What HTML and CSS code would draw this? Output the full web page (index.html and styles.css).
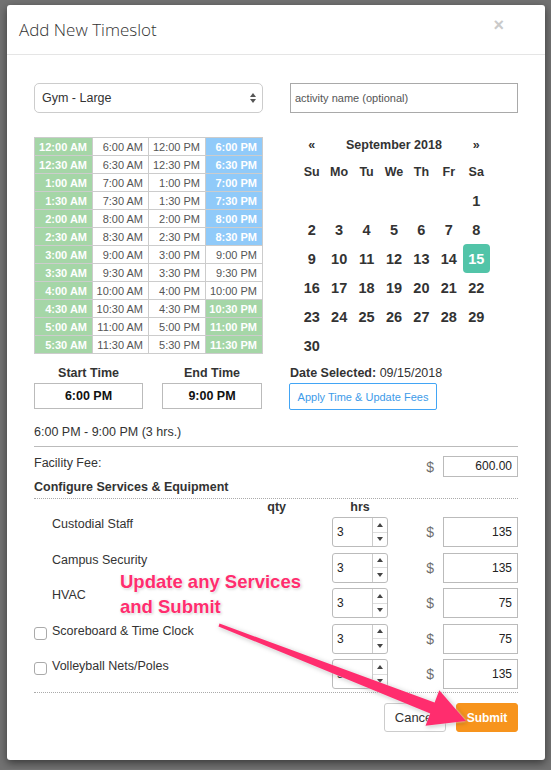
FILE: index.html
```html
<!DOCTYPE html>
<html lang="en">
<head>
    <meta charset="UTF-8">
    <meta name="viewport" content="width=device-width, initial-scale=1.0">
    <title>Add New Timeslot</title>
    <link rel="stylesheet" href="styles.css">
</head>
<body>
    <div class="backdrop">
        <div class="modal">
            <div class="modal-header">
                <h4>Add New Timeslot</h4>
                <span class="close">&times;</span>
            </div>

            <div class="modal-body">
                <div class="two-col">
                    <div class="fake-select">
                        <span>Gym - Large</span>
                        <svg width="6" height="12" viewBox="0 0 6 12">
                            <path d="M0 5 L3 1 L6 5 Z M0 7 L6 7 L3 11 Z" fill="#555"/>
                        </svg>
                    </div>
                    <input class="activity" type="text" placeholder="activity name (optional)">
                </div>

                <div class="two-col picker">
                    <table class="times">
                        <colgroup><col style="width:58px"><col style="width:56px"><col style="width:57px"><col style="width:57px"></colgroup>
                        <tr><td class="on">12:00 AM</td><td>6:00 AM</td><td>12:00 PM</td><td class="sel">6:00 PM</td></tr>
                        <tr><td class="on">12:30 AM</td><td>6:30 AM</td><td>12:30 PM</td><td class="sel">6:30 PM</td></tr>
                        <tr><td class="on">1:00 AM</td><td>7:00 AM</td><td>1:00 PM</td><td class="sel">7:00 PM</td></tr>
                        <tr><td class="on">1:30 AM</td><td>7:30 AM</td><td>1:30 PM</td><td class="sel">7:30 PM</td></tr>
                        <tr><td class="on">2:00 AM</td><td>8:00 AM</td><td>2:00 PM</td><td class="sel">8:00 PM</td></tr>
                        <tr><td class="on">2:30 AM</td><td>8:30 AM</td><td>2:30 PM</td><td class="sel">8:30 PM</td></tr>
                        <tr><td class="on">3:00 AM</td><td>9:00 AM</td><td>3:00 PM</td><td>9:00 PM</td></tr>
                        <tr><td class="on">3:30 AM</td><td>9:30 AM</td><td>3:30 PM</td><td>9:30 PM</td></tr>
                        <tr><td class="on">4:00 AM</td><td>10:00 AM</td><td>4:00 PM</td><td>10:00 PM</td></tr>
                        <tr><td class="on">4:30 AM</td><td>10:30 AM</td><td>4:30 PM</td><td class="on">10:30 PM</td></tr>
                        <tr><td class="on">5:00 AM</td><td>11:00 AM</td><td>5:00 PM</td><td class="on">11:00 PM</td></tr>
                        <tr><td class="on">5:30 AM</td><td>11:30 AM</td><td>5:30 PM</td><td class="on">11:30 PM</td></tr>
                    </table>

                    <table class="calendar">
                        <tr class="nav"><td>&laquo;</td><td colspan="5">September 2018</td><td>&raquo;</td></tr>
                        <tr class="dow"><td>Su</td><td>Mo</td><td>Tu</td><td>We</td><td>Th</td><td>Fr</td><td>Sa</td></tr>
                        <tr class="days"><td></td><td></td><td></td><td></td><td></td><td></td><td>1</td></tr>
                        <tr class="days"><td>2</td><td>3</td><td>4</td><td>5</td><td>6</td><td>7</td><td>8</td></tr>
                        <tr class="days"><td>9</td><td>10</td><td>11</td><td>12</td><td>13</td><td>14</td><td class="today">15</td></tr>
                        <tr class="days"><td>16</td><td>17</td><td>18</td><td>19</td><td>20</td><td>21</td><td>22</td></tr>
                        <tr class="days"><td>23</td><td>24</td><td>25</td><td>26</td><td>27</td><td>28</td><td>29</td></tr>
                        <tr class="days"><td>30</td><td></td><td></td><td></td><td></td><td></td><td></td></tr>
                    </table>
                </div>

                <div class="two-col">
                    <div class="time-boxes">
                        <div>
                            <div class="box-label">Start Time</div>
                            <div class="time-box">6:00 PM</div>
                        </div>
                        <div>
                            <div class="box-label">End Time</div>
                            <div class="time-box">9:00 PM</div>
                        </div>
                    </div>
                    <div>
                        <div class="box-label left"><b>Date Selected:</b> 09/15/2018</div>
                        <button class="apply">Apply Time &amp; Update Fees</button>
                    </div>
                </div>

                <p class="summary">6:00 PM - 9:00 PM (3 hrs.)</p>
                <div class="rule"></div>

                <div class="fee-row">
                    <span class="fee-label">Facility Fee:</span>
                    <span class="dollar">$</span>
                    <div class="price">600.00</div>
                </div>

                <div class="section-title">Configure Services &amp; Equipment</div>
                <div class="rule dotted"></div>

                <div class="svc-head">
                    <span class="check-slot"></span>
                    <span class="svc-name">qty</span>
                    <span class="spin-slot">hrs</span>
                </div>

                <div class="svc-row">
                    <span class="check-slot"></span>
                    <span class="svc-name">Custodial Staff</span>
                    <div class="spin"><span class="val">3</span><span class="arrows"><i class="up"></i><i class="down"></i></span></div>
                    <span class="dollar">$</span>
                    <div class="price">135</div>
                </div>
                <div class="svc-row">
                    <span class="check-slot"></span>
                    <span class="svc-name">Campus Security</span>
                    <div class="spin"><span class="val">3</span><span class="arrows"><i class="up"></i><i class="down"></i></span></div>
                    <span class="dollar">$</span>
                    <div class="price">135</div>
                </div>
                <div class="svc-row">
                    <span class="check-slot"></span>
                    <span class="svc-name">HVAC</span>
                    <div class="spin"><span class="val">3</span><span class="arrows"><i class="up"></i><i class="down"></i></span></div>
                    <span class="dollar">$</span>
                    <div class="price">75</div>
                </div>
                <div class="svc-row">
                    <span class="check-slot"><span class="checkbox"></span></span>
                    <span class="svc-name">Scoreboard &amp; Time Clock</span>
                    <div class="spin"><span class="val">3</span><span class="arrows"><i class="up"></i><i class="down"></i></span></div>
                    <span class="dollar">$</span>
                    <div class="price">75</div>
                </div>
                <div class="svc-row">
                    <span class="check-slot"><span class="checkbox"></span></span>
                    <span class="svc-name">Volleyball Nets/Poles</span>
                    <div class="spin"><span class="val">3</span><span class="arrows"><i class="up"></i><i class="down"></i></span></div>
                    <span class="dollar">$</span>
                    <div class="price">135</div>
                </div>

                <div class="rule dotted footer-rule"></div>
                <div class="footer">
                    <button class="btn-cancel">Cancel</button>
                    <button class="btn-submit">Submit</button>
                </div>
            </div>

            <!-- callout drawn over the form -->
            <div class="callout">Update any Services<br>and Submit</div>
            <svg class="arrow" viewBox="0 0 551 770" width="551" height="770">
                <polygon points="219.5,623.6 434.6,702.4 439.3,690.3 466,721 425.5,725.7 430.2,713.6 218.5,626.4" fill="#ff2d6e"/>
            </svg>
        </div>
    </div>
</body>
</html>
```

FILE: styles.css
```css
body {
    margin: 0;
    background-color: #727272;
    font-family: "Liberation Sans", Arial, sans-serif;
    font-size: 12.5px;
    color: #333;
}

.backdrop {
    padding: 5px 6px 9px 7px;
}

.modal {
    position: relative;
    width: 538px;
    background-color: #fff;
    border-radius: 3px;
    box-shadow: 0 3px 9px rgba(0,0,0,0.5);
}

.modal-header {
    height: 49px;
    border-bottom: 1px solid #e5e5e5;
    display: flex;
    align-items: center;
    justify-content: space-between;
    padding: 0 41px 0 12px;
}

.modal-header h4 {
    margin: 0;
    font-family: "Open Sans", sans-serif;
    font-weight: 300;
    font-size: 17px;
    color: #333;
}

.close {
    font-family: "Liberation Sans", Arial, sans-serif;
    font-size: 18px;
    font-weight: bold;
    color: #cacaca;
    margin-top: -8px;
}

.modal-body {
    padding: 28px 27px 28px;
}

.two-col {
    display: grid;
    grid-template-columns: 229px 228px;
    column-gap: 27px;
    align-items: start;
}

/* inputs */
.fake-select {
    height: 30px;
    box-sizing: border-box;
    border: 1px solid #ccc;
    border-radius: 5px;
    padding: 0 6px 0 7px;
    display: flex;
    align-items: center;
    justify-content: space-between;
}

.activity {
    height: 30px;
    box-sizing: border-box;
    margin: 0;
    border: 1px solid #a9a9a9;
    padding: 0 4px;
    font-family: "Liberation Sans", Arial, sans-serif;
    font-size: 11px;
    outline: none;
}

.activity::placeholder {
    color: #555;
}

.picker {
    margin-top: 24px;
}

/* time grid */
.times {
    border-collapse: collapse;
    table-layout: fixed;
    width: 228px;
    font-size: 11px;
}

.times td {
    height: 17px;
    padding: 0 5px 0 0;
    border: 1px solid #ccc;
    text-align: right;
    color: #555;
    white-space: nowrap;
}

.times td.on {
    background-color: #a5d6a7;
    color: #fff;
    font-weight: bold;
}

.times td.sel {
    background-color: #90caf9;
    color: #fff;
    font-weight: bold;
}

/* calendar */
.calendar {
    border-collapse: separate;
    border-spacing: 0;
    table-layout: fixed;
    width: 192px;
    margin-left: 8px;
    font-weight: bold;
    color: #333;
    text-align: center;
}

.calendar td {
    padding: 0;
}

.calendar .nav td {
    height: 20px;
    line-height: 17px;
    vertical-align: top;
    font-size: 12.5px;
}

.calendar .dow td {
    height: 29px;
    font-size: 12.5px;
}

.calendar .days td {
    height: 29px;
    font-size: 14.5px;
}

.calendar td.today {
    background-color: #52c4a8;
    color: #fff;
    border-radius: 4px;
}

/* start / end */
.time-boxes {
    display: grid;
    grid-template-columns: 109px 100px;
    column-gap: 19px;
}

.box-label {
    margin-top: 5px;
    line-height: 16px;
    text-align: center;
    font-weight: bold;
}

.box-label.left {
    text-align: left;
    font-weight: normal;
}

.time-box {
    margin-top: 2px;
    height: 26px;
    box-sizing: border-box;
    border: 1px solid #bbb;
    line-height: 24px;
    text-align: center;
    font-weight: bold;
    color: #111;
}

.apply {
    display: block;
    margin: 2px 0 0 -1px;
    width: 148px;
    height: 27px;
    background-color: #fff;
    border: 1px solid #42a5f5;
    border-radius: 2px;
    color: #3d9be9;
    font-family: "Liberation Sans", Arial, sans-serif;
    font-size: 11px;
    padding: 0;
}

.summary {
    margin: 14px 0 0;
    line-height: 16px;
}

.rule {
    margin-top: 6px;
    border-top: 1px solid #bbb;
}

.rule.dotted {
    margin-top: 3px;
    border-top: 1px dotted #aaa;
}

.fee-row {
    margin-top: 9px;
    display: flex;
    align-items: center;
}

.fee-label {
    flex: 1;
    align-self: flex-start;
    line-height: 14px;
}

.dollar {
    width: 55px;
    box-sizing: border-box;
    padding-right: 9px;
    text-align: right;
    font-size: 14px;
    color: #6f6f6f;
}

.price {
    width: 75px;
    height: 21px;
    box-sizing: border-box;
    border: 1px solid #bbb;
    padding-right: 5px;
    text-align: right;
    font-size: 12px;
    line-height: 19px;
    color: #222;
}

.section-title {
    margin-top: 2px;
    line-height: 16px;
    font-weight: bold;
}

/* services */
.svc-head,
.svc-row {
    display: flex;
}

.svc-head {
    margin-top: 1px;
    line-height: 14px;
    font-weight: bold;
}

.svc-head .svc-name {
    text-align: right;
    padding-right: 46px;
}

.svc-head .spin-slot {
    width: 56px;
    text-align: center;
}

.svc-row {
    margin-top: 5.5px;
    height: 30px;
    align-items: center;
}

.svc-head + .svc-row {
    margin-top: 2px;
}

.check-slot {
    width: 18px;
    align-self: flex-start;
}

.checkbox {
    display: block;
    margin-top: 3px;
    width: 13px;
    height: 13px;
    box-sizing: border-box;
    border: 1px solid #aaa;
    border-radius: 3px;
}

.svc-name {
    width: 280px;
    box-sizing: border-box;
    align-self: flex-start;
    line-height: 15px;
}

.svc-row .price {
    height: 30px;
    line-height: 28px;
}

.spin {
    width: 56px;
    height: 30px;
    box-sizing: border-box;
    border: 1px solid #bbb;
    border-radius: 3px;
    display: flex;
}

.spin .val {
    flex: 1;
    padding-left: 4px;
    line-height: 28px;
    font-size: 12px;
    color: #222;
}

.spin .arrows {
    width: 14px;
    border-left: 1px solid #ccc;
    display: flex;
    flex-direction: column;
}

.spin .arrows i {
    flex: 1;
    display: flex;
    align-items: center;
    justify-content: center;
}

.spin .arrows i.up {
    border-bottom: 1px solid #ddd;
}

.spin .arrows i::after {
    content: "";
    border-left: 3.5px solid transparent;
    border-right: 3.5px solid transparent;
}

.spin .arrows i.up::after {
    border-bottom: 4px solid #444;
}

.spin .arrows i.down::after {
    border-top: 4px solid #444;
}

/* footer */
.footer-rule {
    margin-top: 6px;
}

.footer {
    margin-top: 10px;
    display: flex;
    justify-content: flex-end;
    gap: 10px;
}

.footer button {
    width: 62px;
    height: 29px;
    padding: 0;
    border-radius: 3px;
    font-family: "Liberation Sans", Arial, sans-serif;
    font-size: 13px;
}

.btn-cancel {
    background-color: #fff;
    border: 1px solid #ccc;
    color: #333;
}

.btn-submit {
    background-color: #f7941d;
    border: 1px solid #f7941d;
    color: #fff;
    font-weight: bold;
    font-size: 12px !important;
}

/* callout over the form */
.callout {
    position: absolute;
    left: 113px;
    top: 564px;
    line-height: 25px;
    font-size: 18.5px;
    font-weight: bold;
    color: #ff2d6e;
    text-shadow: 0 0 2px #fff, 0 0 2px #fff, 1px 1px 3px rgba(0,0,0,0.25);
}

.arrow {
    position: absolute;
    left: -7px;
    top: -5px;
    pointer-events: none;
    filter: drop-shadow(0 0 1px rgba(255,255,255,0.9)) drop-shadow(1px 1px 2px rgba(0,0,0,0.25));
}
```
